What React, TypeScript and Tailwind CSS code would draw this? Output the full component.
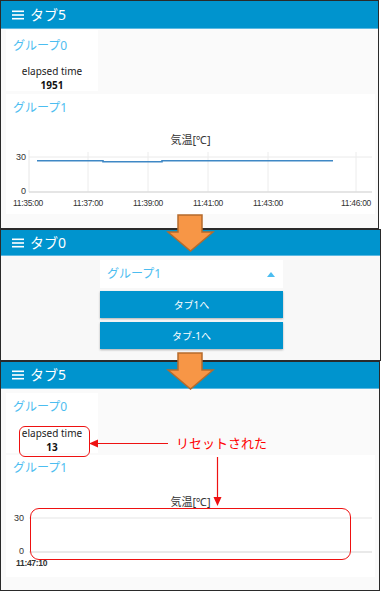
const JP = "font-['Noto_Sans','Noto_Sans_CJK_JP',sans-serif]"

function Burger() {
  return (
    <svg width="12" height="10" viewBox="0 0 12 10" className="shrink-0">
      <rect x="0" y="0.5" width="12" height="1.6" fill="white" />
      <rect x="0" y="4.2" width="12" height="1.6" fill="white" />
      <rect x="0" y="7.9" width="12" height="1.6" fill="white" />
    </svg>
  )
}

function Header({ title, h }: { title: string; h: string }) {
  return (
    <div className={`${h} flex items-center gap-[6px] border-b border-[#5cb9e2] bg-[#0094ce] pl-[11px] text-[14px] text-white`}>
      <Burger />
      <span className="leading-none">{title}</span>
    </div>
  )
}

function GroupTitle({ children }: { children: React.ReactNode }) {
  return (
    <div className="flex h-[16px] items-center pl-[7px] text-[12px] leading-none text-[#4cbdf0]">{children}</div>
  )
}

function Line({ children, className = '' }: { children: React.ReactNode; className?: string }) {
  return <div className={`flex h-[12px] items-center justify-center text-[10px] leading-none ${className}`}>{children}</div>
}

function ChartTitle({ className }: { className: string }) {
  return (
    <div className={`flex h-[14px] items-center justify-center text-[11px] leading-none text-[#333] ${className}`}>
      気温[℃]
    </div>
  )
}

function Chart1() {
  const xs = [
    [22, '11:35:00'],
    [82, '11:37:00'],
    [142, '11:39:00'],
    [202, '11:41:00'],
    [262, '11:43:00'],
    [350, '11:46:00'],
  ] as const
  return (
    <svg width="369" height="66" className="block">
      <line x1="23" y1="11" x2="366" y2="11" stroke="#eaeaea" />
      {xs.slice(1).map(([x]) => (
        <line key={x} x1={x} y1="6" x2={x} y2="46" stroke="#ececec" />
      ))}
      <line x1="23" y1="4" x2="23" y2="46" stroke="#e6e6e6" />
      <line x1="23" y1="46" x2="366" y2="46" stroke="#dcdcdc" strokeWidth="1.5" />
      <text x="20" y="14" textAnchor="end" fontSize="9" fill="#333" fontFamily="Liberation Sans">30</text>
      <text x="20" y="48" textAnchor="end" fontSize="9" fill="#333" fontFamily="Liberation Sans">0</text>
      {xs.map(([x, t]) => (
        <text key={t} x={x} y="60" textAnchor="middle" fontSize="8.5" fill="#333" fontFamily="Liberation Sans" letterSpacing="-0.3">
          {t}
        </text>
      ))}
      <polyline
        points="31,14.7 97,14.7 97,15.7 156,15.7 156,14.7 327,14.7"
        fill="none"
        stroke="#3f88c5"
        strokeWidth="1.6"
      />
    </svg>
  )
}

function Chart2() {
  return (
    <svg width="369" height="62" className="block">
      <line x1="23" y1="10" x2="366" y2="10" stroke="#eeeeee" strokeWidth="1.5" />
      <line x1="23" y1="44" x2="366" y2="44" stroke="#e2e2e2" strokeWidth="1.5" />
      <text x="18" y="13" textAnchor="end" fontSize="9" fill="#333" fontFamily="Liberation Sans">30</text>
      <text x="18" y="46" textAnchor="end" fontSize="9" fill="#333" fontFamily="Liberation Sans">0</text>
      <text x="10" y="58" fontSize="8.5" fontWeight="bold" fill="#333" fontFamily="Liberation Sans" letterSpacing="-0.3">
        11:47:10
      </text>
    </svg>
  )
}

function OrangeArrow({ top }: { top: string }) {
  return (
    <svg width="49" height="40" viewBox="0 0 49 40" className={`absolute left-[166px] ${top}`}>
      <polygon
        points="12,1 36,1 36,18 47,18 24.5,37 2,18 12,18"
        fill="#f79646"
        stroke="#b56b2c"
        strokeWidth="1.5"
      />
    </svg>
  )
}

export default function App() {
  return (
    <div className={`relative h-[591px] w-[381px] overflow-hidden bg-white ${JP}`}>
      {/* screen 1 */}
      <div className="flex h-[229px] w-[379px] flex-col border border-[#2a2a2a]">
        <Header title="タブ5" h="h-[28px]" />
        <div className="flex-1 bg-[#fafafa] px-[5px] pt-px">
          <div className="h-[61px] w-[92px] bg-white pt-[8px]">
            <GroupTitle>グループ0</GroupTitle>
            <Line className="mt-[11px] text-[#222]">elapsed time</Line>
            <Line className="mt-[2px] font-bold text-[#111]">1951</Line>
          </div>
          <div className="mt-[3px] h-[120px] w-[369px] bg-white pt-[6px]">
            <GroupTitle>グループ1</GroupTitle>
            <ChartTitle className="mt-[16px]" />
            <Chart1 />
          </div>
        </div>
      </div>

      {/* screen 2 */}
      <div className="flex h-[132px] w-[381px] flex-col border border-[#2a2a2a]">
        <Header title="タブ0" h="h-[26px]" />
        <div className="flex-1 bg-[#f8f8f8] pt-[4px]">
          <div className="ml-[99px] w-[183px]">
            <div className="flex h-[28px] items-center justify-between bg-white pl-[7px] pr-[8px]">
              <span className="text-[12px] leading-none text-[#4cbdf0]">グループ1</span>
              <svg width="8" height="5" viewBox="0 0 8 5">
                <polygon points="0,5 4,0 8,5" fill="#4cbdf0" />
              </svg>
            </div>
            <button className="mt-[3px] flex h-[27px] w-full items-center justify-center bg-[#0094ce] text-[10px] leading-none text-white shadow-[0_1px_2px_rgba(0,0,0,0.3)]">
              タブ1へ
            </button>
            <button className="mt-[4px] flex h-[27px] w-full items-center justify-center bg-[#0094ce] text-[10px] leading-none text-white shadow-[0_1px_2px_rgba(0,0,0,0.3)]">
              タブ-1へ
            </button>
          </div>
        </div>
      </div>

      {/* screen 3 */}
      <div className="flex h-[230px] w-[380px] flex-col border border-[#2a2a2a]">
        <Header title="タブ5" h="h-[27px]" />
        <div className="flex-1 bg-[#fafafa] px-[5px] pt-[4px]">
          <div className="h-[60px] w-[92px] bg-white pt-[6px]">
            <GroupTitle>グループ0</GroupTitle>
            <Line className="mt-[12px] text-[#222]">elapsed time</Line>
            <Line className="mt-[2px] font-bold text-[#111]">13</Line>
          </div>
          <div className="mt-[2px] h-[122px] w-[369px] bg-white pt-[5px]">
            <GroupTitle>グループ1</GroupTitle>
            <ChartTitle className="mt-[18px]" />
            <Chart2 />
          </div>
        </div>
      </div>

      {/* annotations */}
      <OrangeArrow top="top-[214px]" />
      <OrangeArrow top="top-[352px]" />

      <div className="absolute left-[19px] top-[426px] h-[31px] w-[71px] rounded-[6px] border-[1.5px] border-[#ee1111]" />
      <div className="absolute left-[30px] top-[508px] h-[52px] w-[321px] rounded-[9px] border-[1.5px] border-[#ee1111]" />
      <div className="absolute left-[176px] top-[433px] text-[13px] leading-[20px] text-[#ff0000]">リセットされた</div>
      <svg width="400" height="600" className="pointer-events-none absolute left-0 top-0">
        <line x1="168" y1="443.5" x2="96" y2="443.5" stroke="#ee1111" strokeWidth="1.2" />
        <polygon points="89,443.5 98,439.5 98,447.5" fill="#ee1111" />
        <line x1="217.5" y1="457" x2="217.5" y2="498" stroke="#ee1111" strokeWidth="1.2" />
        <polygon points="217.5,506 213.5,497 221.5,497" fill="#ee1111" />
      </svg>
    </div>
  )
}
